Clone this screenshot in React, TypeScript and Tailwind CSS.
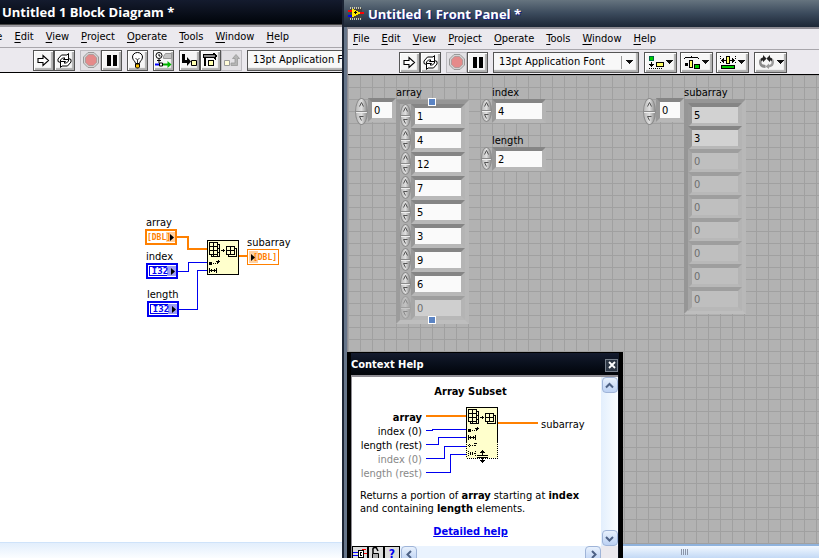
import type { ReactNode } from 'react';
import clsx from 'clsx';

const UI_FONT = "font-['DejaVu_Sans_Condensed','DejaVu_Sans',sans-serif]";
const TITLE_FONT = "font-['Open_Sans','Noto_Sans',sans-serif]";

/* === Small drawings === */

const DownTriangle = () => (
  <svg width="7" height="4" viewBox="0 0 7 4" shapeRendering="crispEdges">
    <path d="M0 0h7v1H6v1H5v1H4v1H3V3H2V2H1V1H0z" fill="#111" />
  </svg>
);

const RunIcon = () => (
  <svg width="13" height="13" viewBox="0 0 13 13">
    <path d="M1 4.500h5v-3l5.500 5-5.500 5v-3H1z" fill="#fff" stroke="#000" strokeWidth="1.100" />
  </svg>
);

const RunLoopIcon = () => (
  <svg width="17" height="15" viewBox="0 0 17 15" fill="#fff" stroke="#000">
    <path d="M2 8.500V6l3.500-4H11l1.500-1.500V6.500H7.500L9 5H6.500L4.500 7v2.500z" />
    <path d="M15 6.500V9l-3.500 4H6L4.500 14.500V8.500h5L8 10h2.500L12.500 8V5.500z" />
  </svg>
);

const AbortIcon = () => (
  <svg width="16" height="16" viewBox="0 0 16 16">
    <path d="M5 .5h6L15.500 5v6L11 15.500H5L.5 11V5z" fill="#d4d4d4" stroke="#999" />
    <path d="M5.700 2.500h4.600L13.500 5.700v4.600l-3.200 3.200H5.700L2.500 10.300V5.700z" fill="#e58a8a" stroke="#a09090" strokeWidth=".7" />
  </svg>
);

const PauseIcon = () => (
  <svg width="10" height="11" viewBox="0 0 10 11">
    <path d="M0 0h4v11H0zM6 0h4v11H6z" fill="#000" />
  </svg>
);

const BulbIcon = () => (
  <svg width="13" height="17" viewBox="0 0 13 17">
    <path d="M4.500 11.500C4.500 9 1.500 8.500 1.500 5a5 4.500 0 0 1 10 0c0 3.500-3 4-3 6.500z" fill="#fff" stroke="#000" />
    <path d="M4.500 6l2 2 2-2M6.500 8v3" fill="none" stroke="#000" strokeWidth=".8" />
    <path d="M4.500 12h4v3l-1 1h-2l-1-1z" fill="#ffc400" stroke="#000" />
  </svg>
);

const RetainIcon = () => (
  <svg width="17" height="16" viewBox="0 0 17 16">
    <circle cx="4" cy="3.500" r="3" fill="#fff" stroke="#000" />
    <path d="M4 2v2h1.500M4 7v4M2 8.500h4" fill="none" stroke="#000" />
    <path d="M8.500 4.500l2-3h6v5h-8z" fill="#c4c4c4" stroke="#999" />
    <path d="M0 12.500h7" stroke="#00f" strokeWidth="2" />
    <path d="M8 12.500h6" stroke="#0a0" strokeWidth="2" />
    <path d="M12.500 9l4 3.500-4 3.500z" fill="#0b0" />
    <path d="M4.500 11v3h3v-3z" fill="#fff" stroke="#000" />
  </svg>
);

const StepIntoIcon = () => (
  <svg width="17" height="13" viewBox="0 0 17 13">
    <path d="M1 0h3v6h2V3l4 4.500L6 12V9H1z" fill="#000" />
    <path d="M10.500 6.500h5v5h-5z" fill="#ffffb0" stroke="#000" />
  </svg>
);

const StepOverIcon = () => (
  <svg width="15" height="14" viewBox="0 0 15 14" shapeRendering="crispEdges">
    <path d="M.5 1.500h10v-1h1v1h1v1h1v1h-1v2h-1v-1H.5z" fill="#888" stroke="#000" />
    <path d="M5.500 7.500h5v5h-5z" fill="#ffffb0" stroke="#000" />
    <path d="M1 5h2v8H1z" fill="#000" />
    <path d="M12 5h1v2h-1z" fill="#000" />
  </svg>
);

const StepOutIcon = () => (
  <svg width="16" height="13" viewBox="0 0 16 13">
    <path d="M.5 6.500h5v5h-5z" fill="#fffbd8" stroke="#999" />
    <path d="M7 9h4V4.500H8.500l3.500-4 3.500 4H13.500v7H7z" fill="#b5b5b5" stroke="#999" strokeWidth=".8" />
  </svg>
);

const AlignIcon = () => (
  <svg width="15" height="13" viewBox="0 0 15 13" shapeRendering="crispEdges">
    <path d="M.5.5h4v4h-4z" fill="#0c0" stroke="#064" />
    <path d="M7.500 6.500h7v4h-7z" fill="#ff6" stroke="#000" />
    <path d="M2 6h1v2h2v1H4v1H3v1H2v-1H1V9H0V8h2zM0 12h1v1H0zM2 12h1v1H2zM4 12h1v1H4zM6 12h1v1H6zM8 12h1v1H8zM10 12h1v1h-1zM12 12h1v1h-1z" fill="#000" />
  </svg>
);

const DistributeIcon = () => (
  <svg width="16" height="13" viewBox="0 0 16 13" shapeRendering="crispEdges">
    <path d="M0 2h1V1h6V0h1v1h6v1h1v1h-1V2H1v1H0zM1 7h3v3H1z" fill="#000" />
    <path d="M5.500 4.500h3v7h-3z" fill="#ff6" stroke="#000" />
    <path d="M10.500 8.500h5v4h-5z" fill="#0c0" stroke="#000" />
  </svg>
);

const ResizeIcon = () => (
  <svg width="16" height="13" viewBox="0 0 16 13" shapeRendering="crispEdges">
    <path d="M6.500.5h3v7h-3z" fill="#ff6" stroke="#000" />
    <path d="M1.500 9.500h13v3h-13z" fill="#0c0" stroke="#000" />
    <path d="M0 0h1v1H0zM0 2h1v1H0zM0 6h1v1H0zM15 0h1v1h-1zM15 2h1v1h-1zM15 6h1v1h-1zM1 4h1V3h1V2h1v2h2v1H4v2H3V6H2V5H1zM15 4h-1V3h-1V2h-1v2h-2v1h2v2h1V6h1V5h1z" fill="#000" />
  </svg>
);

const ReorderIcon = () => (
  <svg width="17" height="14" viewBox="0 0 17 14">
    <path d="M1 7c0-2.500 1.500-4 4-4.500V1l3 3-3 3V5.500C4 6 3.500 6.500 3.500 7.500 3.500 9 5 10 7.500 10v3C3 13 1 10.500 1 7z" fill="#8a8a8a" />
    <path d="M16 7c0-2.500-1.500-4-4-4.500V1L9 4l3 3V5.500c1 .5 1.500 1 1.500 2 0 1.500-1 2-2.500 2.500V8.500L7.500 11.500 11 14v-1.500c3.500-.5 5-2.500 5-5.500z" fill="#9c9c9c" />
    <path d="M3 3.500L5 2.500V0l3.500 3.500L5 7V5L3 6zM14 3.500l-2-1V0L8.500 3.500 12 7V5l2 1z" fill="#222" />
  </svg>
);

const ViIcon = () => (
  <svg className="shrink-0" width="16" height="13" viewBox="0 0 16 13" shapeRendering="crispEdges">
    <path d="M2 1h12v11H2z" fill="#444" />
    <path d="M2 0h1v2H2zM4 0h1v2H4zM6 0h1v2H6zM8 0h1v2H8zM10 0h1v2h-1zM12 0h1v2h-1zM2 11h1v2H2zM4 11h1v2H4zM6 11h1v2H6zM8 11h1v2H8zM10 11h1v2h-1zM12 11h1v2h-1z" fill="#c8c8b0" />
    <path d="M4 2h2v1h2v1h2v1h2v2h-2v1H8v1H6v1H4z" fill="#ffe600" />
    <path d="M6 5h3v1H6zM7 4h1v3H7z" fill="#000" />
    <path d="M0 3h4v2H0zM12 5h4v2h-4z" fill="#f00" />
    <path d="M0 8h4v2H0z" fill="#00f" />
  </svg>
);

/* glyphs inside the yellow Array Subset node */
const SubsetGlyph = () => (
  <g fill="none" stroke="#000">
    <path d="M4.500 14.500v2h8v-12h-2" />
    <path d="M2.500 2.500h8v12h-8zM6.500 2.500v12M2.500 6.500h8M2.500 10.500h8" />
    <path d="M6 16.500v-2M12 8.500h-1M12 12.500h-1M10.500 14v2" />
    <path d="M14 10.500h4M16.500 9v3" />
    <path d="M21.500 14.500v2h8v-8h-2" />
    <path d="M19.500 6.500h8v8h-8zM23.500 6.500v8M19.500 10.500h8" />
    <path d="M2 22h3v3H2z" fill="#000" stroke="none" />
    <path d="M6 23.500h1M8 23.500h1M10.500 24v-3M9 21.500h4M11.500 20v3" />
    <path d="M2.500 28v5M9.500 28v5M3 30.500h7M4.500 29v3M7.500 29v3" />
  </g>
);

/* === Menu and toolbar === */

const MENUS = ['File', 'Edit', 'View', 'Project', 'Operate', 'Tools', 'Window', 'Help'];

function MenuBar({ className }: { className?: string }) {
  return (
    <nav className={clsx('flex shrink-0 items-center gap-3 bg-[#ebe9ee] whitespace-nowrap', className)}>
      {MENUS.map((m) => (
        <button key={m} type="button" className="shrink-0">
          <span className="underline underline-offset-2">{m[0]}</span>
          {m.slice(1)}
        </button>
      ))}
    </nav>
  );
}

type ToolProps = { label: string; children: ReactNode; disabled?: boolean; wide?: boolean };

function Tool({ label, children, disabled, wide }: ToolProps) {
  return (
    <button
      type="button"
      aria-label={label}
      disabled={disabled}
      className={clsx(
        'flex h-[21px] shrink-0 items-center justify-center border',
        wide ? 'w-[33px] gap-[2px]' : 'w-[21px]',
        disabled
          ? 'border-[#bdbbc0] bg-[#e3e1e5]'
          : 'border-[#555] bg-[#f6f6f6] shadow-[inset_1px_1px_0_#fff,inset_-2px_-2px_1px_#b0b0b0]',
      )}
    >
      {children}
      {wide && <DownTriangle />}
    </button>
  );
}

function FontSelect({ id }: { id: string }) {
  return (
    <div className="relative h-[21px] w-[146px] shrink-0 border border-[#555] bg-[#f8f8f8] shadow-[inset_-2px_-2px_1px_#b0b0b0]">
      <select id={id} aria-label="Font" className="h-full w-full appearance-none bg-transparent pl-[5px] outline-none">
        <option>13pt Application Font</option>
      </select>
      <span className="pointer-events-none absolute inset-y-[3px] right-[5px] flex items-center border-l border-[#999] pl-[4px]">
        <DownTriangle />
      </span>
    </div>
  );
}

function RunTools() {
  return (
    <>
      <div className="flex">
        <Tool label="Run"><RunIcon /></Tool>
        <Tool label="Run Continuously"><RunLoopIcon /></Tool>
      </div>
      <div className="flex">
        <Tool label="Abort Execution" disabled><AbortIcon /></Tool>
        <Tool label="Pause"><PauseIcon /></Tool>
      </div>
    </>
  );
}

/* === Block diagram === */

type TerminalProps = { kind: 'DBL' | 'I32'; output?: boolean; className: string };

function Terminal({ kind, output, className }: TerminalProps) {
  const orange = kind === 'DBL';
  return (
    <div
      className={clsx(
        'absolute flex h-4 w-8 items-center justify-center bg-white leading-[9px] font-bold',
        "font-['DejaVu_Sans_Mono',monospace]",
        orange ? 'border-[#ff8000] text-[8px] text-[#ff8000]' : 'border-[#0000f0] text-[9px] text-[#0000f0]',
        output ? 'border' : 'border-2',
        className,
      )}
    >
      {!orange && <span className="absolute inset-px border border-[#0000f0]" />}
      <span className={clsx('absolute inset-y-px w-[9px]', output ? 'left-px' : 'right-0', orange ? 'bg-[#ffd0a0]' : 'bg-[#9c9cf4]')} />
      <span className={clsx('relative', output ? 'pl-1' : 'pr-1')}>{orange ? '[DBL]' : 'I32'}</span>
      <svg className={clsx('absolute', output ? 'left-[3px]' : 'right-px')} width="4" height="7" viewBox="0 0 4 7">
        <path d="M0 0l4 3.500L0 7z" fill="#000" />
      </svg>
    </div>
  );
}

function BlockDiagram() {
  return (
    <section className="flex w-[342px] shrink-0 flex-col overflow-hidden bg-white">
      <header className="flex h-6 shrink-0 items-center bg-linear-to-b from-[#141b2e] via-[#0b101c] to-[#02050a] pl-[2px]">
        <h1 className={clsx('text-[13px] font-bold whitespace-nowrap text-white', TITLE_FONT)}>Untitled 1 Block Diagram *</h1>
      </header>
      <div className="h-[3px] shrink-0 border-t border-[#444] bg-[#9c9aa0]" />
      <MenuBar className="h-5 justify-end pr-[53px]" />
      <div className="flex h-[26px] shrink-0 items-center gap-[5px] border-t border-b border-t-[#a8a6ab] border-b-black bg-[#ebe9ee] pl-[33px]">
        <RunTools />
        <Tool label="Highlight Execution"><BulbIcon /></Tool>
        <Tool label="Retain Wire Values"><RetainIcon /></Tool>
        <div className="flex">
          <Tool label="Step Into"><StepIntoIcon /></Tool>
          <Tool label="Step Over"><StepOverIcon /></Tool>
          <Tool label="Step Out" disabled><StepOutIcon /></Tool>
        </div>
        <FontSelect id="diagram-font" />
      </div>

      <div className="relative min-h-0 flex-1">
        <svg className="absolute top-[150px] left-[140px]" width="150" height="100" viewBox="0 0 150 100" shapeRendering="crispEdges">
          <g fill="none">
            <path d="M36 14h12v12h20M99 33h9" stroke="#ff8000" strokeWidth="2" />
            <path d="M38 48.500h10.500v-9H68M38 86.500h19.500v-39H68" stroke="#0000f0" />
          </g>
          <path d="M67.500 17.500h31v34h-31z" fill="#ffffcc" stroke="#000" />
          <g transform="translate(67 17)"><SubsetGlyph /></g>
        </svg>
        <span className="absolute top-[143px] left-[146px]">array</span>
        <Terminal kind="DBL" className="top-[156px] left-[145px]" />
        <span className="absolute top-[177px] left-[146px]">index</span>
        <Terminal kind="I32" className="top-[190px] left-[146px]" />
        <span className="absolute top-[215px] left-[147px]">length</span>
        <Terminal kind="I32" className="top-[228px] left-[147px]" />
        <span className="absolute top-[163px] left-[247px]">subarray</span>
        <Terminal kind="DBL" output className="top-[176px] left-[247px]" />
      </div>
      <div className="h-4 shrink-0 border-t border-[#cfe3fa] bg-linear-to-b from-[#e2eefc] to-[#fbfdff]" />
    </section>
  );
}

/* === Front panel controls === */

function Spinner({ small, dim, label }: { small?: boolean; dim?: boolean; label: string }) {
  return (
    <span
      className={clsx(
        'relative flex shrink-0 flex-col overflow-hidden rounded-[50%] border border-[#8c8c8c] bg-linear-to-r from-[#bcbcbc] via-[#dedede] to-[#909090]',
        small ? 'h-[23px] w-[11px]' : 'h-[27px] w-[13px]',
        dim && 'opacity-40',
      )}
    >
      <button type="button" aria-label={`Increment ${label}`} className="flex flex-1 items-center justify-center border-b border-[#8a8a8a]">
        <svg width="5" height="5" viewBox="0 0 5 5">
          <path d="M.5 4.500L2.500.5l2 4" fill="none" stroke="#555" />
        </svg>
      </button>
      <button type="button" aria-label={`Decrement ${label}`} className="flex flex-1 items-center justify-center border-t border-[#eee]">
        <svg width="5" height="5" viewBox="0 0 5 5">
          <path d="M4.500.5h-4l2 4" fill="none" stroke="#555" />
        </svg>
      </button>
    </span>
  );
}

type FieldProps = { id: string; value: number; label?: string; look?: 'control' | 'indicator' | 'dim' | 'dimControl'; narrow?: boolean };

function Field({ id, value, label, look = 'control', narrow }: FieldProps) {
  const dim = look === 'dim' || look === 'dimControl';
  return (
    <span
      className={clsx(
        'flex border-4 border-r-[#b4b4b4] border-b-[#b8b8b8]',
        dim ? 'border-t-[#9e9e9e] border-l-[#a6a6a6]' : 'border-t-[#858585] border-l-[#989898]',
      )}
    >
      <input
        id={id}
        aria-label={label}
        defaultValue={value}
        readOnly={look === 'indicator' || look === 'dim'}
        className={clsx(
          'h-4 px-[2px] outline-none',
          narrow ? 'w-5' : 'w-[46px]',
          look === 'control' && 'bg-[#fafafa] text-black',
          look === 'indicator' && 'bg-[#d2d2d2] text-black',
          look === 'dim' && 'bg-[#bfbfbf] text-[#6e6e6e]',
          look === 'dimControl' && 'bg-[#cfcfcf] text-[#6e6e6e]',
        )}
      />
    </span>
  );
}

function NumericControl({ id, value, className }: { id: string; value: number; className: string }) {
  return (
    <div className={clsx('absolute', className)}>
      <label htmlFor={id} className="block pl-[11px] leading-[13px]">{id}</label>
      <div className="flex items-start">
        <Spinner small label={id} />
        <Field id={id} value={value} />
      </div>
    </div>
  );
}

function IndexControl({ id, label, className }: { id: string; label: string; className: string }) {
  return (
    <div className={clsx('absolute flex items-start', className)}>
      <Spinner label={label} />
      <Field id={id} value={0} label={label} narrow />
    </div>
  );
}

const ARRAY = [1, 4, 12, 7, 5, 3, 9, 6, 0];
const SUBARRAY = [5, 3, 0, 0, 0, 0, 0, 0, 0];

function PanelCanvas() {
  return (
    <div className="relative min-h-0 flex-1 overflow-hidden bg-[#b2b2b2] bg-[linear-gradient(to_right,#a0a0a0_1px,transparent_1px),linear-gradient(to_bottom,#a0a0a0_1px,transparent_1px)] bg-[size:12px_12px]">
      <IndexControl id="array-index" label="array index" className="top-[23px] left-[7px]" />
      <div className="absolute top-[11px] left-[48px]">
        <span className="block">array</span>
        <div className="relative border-4 border-t-[#969696] border-r-[#b8b8b8] border-b-[#bebebe] border-l-[#9c9c9c] bg-[#aeaeae]">
          {ARRAY.map((n, i) => (
            <div key={i} className="flex h-6">
              <Spinner small dim={i === 8} label={`array element ${i}`} />
              <Field id={`array-${i}`} value={n} label={`array element ${i}`} look={i === 8 ? 'dimControl' : 'control'} />
            </div>
          ))}
          <span className="absolute -top-[6px] left-7 size-2 border border-white bg-[#5b84c4]" />
          <span className="absolute -bottom-1 left-7 size-2 border border-white bg-[#5b84c4]" />
        </div>
      </div>
      <NumericControl id="index" value={4} className="top-[11px] left-[133px]" />
      <NumericControl id="length" value={2} className="top-[59px] left-[133px]" />
      <IndexControl id="subarray-index" label="subarray index" className="top-[23px] left-[295px]" />
      <div className="absolute top-[11px] left-[336px]">
        <span className="block leading-[13px]">subarray</span>
        <div className="border-4 border-t-[#969696] border-r-[#b8b8b8] border-b-[#bebebe] border-l-[#969696] bg-[#aeaeae]">
          {SUBARRAY.map((n, i) => (
            <div key={i} className="h-[23px]">
              <Field id={`subarray-${i}`} value={n} label={`subarray element ${i}`} look={i < 2 ? 'indicator' : 'dim'} />
            </div>
          ))}
        </div>
      </div>
    </div>
  );
}

function FrontPanel() {
  return (
    <section className="flex min-w-0 flex-1 flex-col overflow-hidden border-l-2 border-[#1b2434] bg-[#66758a]">
      <header className="flex h-[27px] shrink-0 items-center gap-1 bg-linear-to-b from-[#66747f] via-[#3b4a5c] to-[#1d2736] pl-1">
        <ViIcon />
        <h1 className={clsx('text-[13px] font-bold whitespace-nowrap text-white [text-shadow:1px_1px_0_#14208c]', TITLE_FONT)}>
          Untitled 1 Front Panel *
        </h1>
      </header>
      <div className="ml-[3px] flex min-h-0 flex-1 flex-col border-t-2 border-l border-[#8f8d94] bg-[#ebe9ee]">
        <MenuBar className="h-5 pl-[5px]" />
        <div className="flex h-[26px] shrink-0 items-center gap-[5px] border-t border-b border-t-[#a8a6ab] border-b-black bg-[#ebe9ee] pl-[51px]">
          <RunTools />
          <FontSelect id="panel-font" />
          <div className="flex gap-[3px]">
            <Tool label="Align Objects" wide><AlignIcon /></Tool>
            <Tool label="Distribute Objects" wide><DistributeIcon /></Tool>
            <Tool label="Resize Objects" wide><ResizeIcon /></Tool>
          </div>
          <Tool label="Reorder" wide><ReorderIcon /></Tool>
        </div>
        <PanelCanvas />
        <div className="flex h-[14px] shrink-0 items-center border-t-2 border-[#8fb2dc] bg-linear-to-b from-[#f2f8ff] to-[#c3d9f5] pl-[333px]">
          <svg width="8" height="6" viewBox="0 0 8 6" shapeRendering="crispEdges">
            <path d="M.5 0v6M2.500 0v6M4.500 0v6M6.500 0v6" stroke="#8a94a8" />
          </svg>
        </div>
      </div>
    </section>
  );
}

/* === Context help window === */

function ScrollButton({ label, d }: { label: string; d: string }) {
  return (
    <button type="button" aria-label={label} className="flex size-4 shrink-0 items-center justify-center rounded-sm border border-[#9fb4d8] bg-linear-to-b from-[#e8f1fd] to-[#bcd1f3]">
      <svg width="9" height="9" viewBox="0 0 9 9">
        <path d={d} fill="none" stroke="#4d6185" strokeWidth="2" />
      </svg>
    </button>
  );
}

function ContextHelp() {
  return (
    <aside className="absolute top-[352px] bottom-0 left-[347px] flex w-[276px] flex-col overflow-hidden border-t border-r-4 border-l-4 border-black bg-[#0a0f1a]">
      <header className="flex h-[22px] shrink-0 items-center justify-between bg-linear-to-b from-[#141b2e] to-[#02050a] pt-[2px] pr-px">
        <h2 className="font-bold text-white">Context Help</h2>
        <button type="button" aria-label="Close" className="flex size-[13px] items-center justify-center border border-[#77808c] bg-[#2e3846]">
          <svg width="8" height="8" viewBox="0 0 8 8">
            <path d="M1 1l6 6M7 1L1 7" stroke="#fff" strokeWidth="1.800" />
          </svg>
        </button>
      </header>
      <div className="mr-px flex min-h-0 flex-1 border-t-2 border-l border-[#8f8d94] bg-white">
        <div className="flex min-w-0 flex-1 flex-col">
          <h3 className="mt-2 pr-3 text-center font-bold">Array Subset</h3>
          <div className="mt-3 flex">
            <div className="w-[70px] shrink-0 text-right whitespace-nowrap">
              <div className="font-bold">array</div>
              <div>index (0)</div>
              <div>length (rest)</div>
              <div className="text-[#888]">index (0)</div>
              <div className="text-[#888]">length (rest)</div>
            </div>
            <svg className="-mt-[5px] ml-[3px] shrink-0" width="114" height="72" viewBox="0 0 114 72" shapeRendering="crispEdges">
              <g fill="none">
                <path d="M1 10h41M73 17h40" stroke="#ff8000" strokeWidth="2" />
                <path d="M1 24.500h6.500v-1H41M1 38.500h12.500v-7H41M1 52.500h18.500v-12H41M1 66.500h24.500v-18H41" stroke="#0000f0" />
              </g>
              <path d="M41 1h32v51H41z" fill="#ffffcc" />
              <path d="M41.500 36V1.500h31V36" fill="none" stroke="#000" />
              <path d="M41.500 36v16M72.500 36v16M42 52.500h31" fill="none" stroke="#000" strokeDasharray="1 1" />
              <g transform="translate(41 1)"><SubsetGlyph /></g>
              <g stroke="#000" strokeDasharray="1 1" fill="none">
                <path d="M43 39.500h3M44.500 38v3M47 39.500h3M50.500 40v-3M49 37.500h4" />
                <path d="M43 47.500h8M43.500 45v5M50.500 45v5M45 46.500h4M45 48.500h4" />
              </g>
              <path d="M57 48v-1h-2v-1h1v-1h1v-1h1v1h1v1h1v1h-2v2h-1zM52 49h11v1H52zM52 51h11v1H52zM57 52h1v2h2v1h-1v1h-1v1h-1v-1h-1v-1h-1v-1h2z" fill="#000" />
            </svg>
            <span className="mt-[7px] ml-[2px]">subarray</span>
          </div>
          <p className="mt-2 pl-2 leading-[13px] whitespace-nowrap">
            Returns a portion of <b>array</b> starting at <b>index</b>
            <br />
            and containing <b>length</b> elements.
          </p>
          <div className="mt-[10px] pr-3 text-center">
            <a href="#" className="font-bold text-[#0000f0] underline">Detailed help</a>
          </div>
          <div className="mt-auto flex h-3 shrink-0 items-start overflow-hidden bg-[#eaf3fe]">
            <button type="button" aria-label="Show terminals" className="h-4 w-4 border border-black bg-[#dcdcdc]">
              <svg width="14" height="12" viewBox="0 0 14 12" shapeRendering="crispEdges">
                <path d="M5.500 2.500h5v7h-5z" fill="#fff" stroke="#000" />
                <path d="M0 4.500h5M0 7.500h5" stroke="#00f" />
                <path d="M9 1.500h4M11 5.500h3" stroke="#f00" />
                <path d="M9 4.500H7.500v3H9" stroke="#000" fill="none" />
              </svg>
            </button>
            <button type="button" aria-label="Lock" className="flex h-4 w-4 justify-center border border-black bg-[#dcdcdc]">
              <svg width="10" height="14" viewBox="0 0 10 14">
                <path d="M2 6V3a2 2 0 0 1 4-1l1 2" fill="none" stroke="#000" strokeWidth="1.500" />
                <path d="M1.500 6.500h6v6h-6z" fill="#aaa" stroke="#000" />
              </svg>
            </button>
            <button type="button" aria-label="More help" className="h-4 w-4 border border-black bg-[#dcdcdc] text-[12px] leading-[11px] font-bold text-[#0000f0]">?</button>
            <span className="w-px" />
            <ScrollButton label="Scroll left" d="M6 1L2.500 4.500L6 8" />
            <span className="flex-1" />
            <ScrollButton label="Scroll right" d="M3 1l3.500 3.500L3 8" />
          </div>
        </div>
        <div className="flex w-[17px] shrink-0 flex-col items-center justify-between bg-linear-to-r from-[#e3effd] to-[#fafdff]">
          <ScrollButton label="Scroll up" d="M1 6.500L4.500 3L8 6.500" />
          <span className="flex-1" />
          <ScrollButton label="Scroll down" d="M1 3l3.500 3.500L8 3" />
          <span className="h-3 w-full shrink-0 bg-[#ebe9ee]" />
        </div>
      </div>
    </aside>
  );
}

export default function App() {
  return (
    <main className={clsx('relative flex h-screen min-h-[480px] overflow-hidden text-[11px] leading-[14px] text-black', UI_FONT)}>
      <BlockDiagram />
      <FrontPanel />
      <ContextHelp />
    </main>
  );
}
